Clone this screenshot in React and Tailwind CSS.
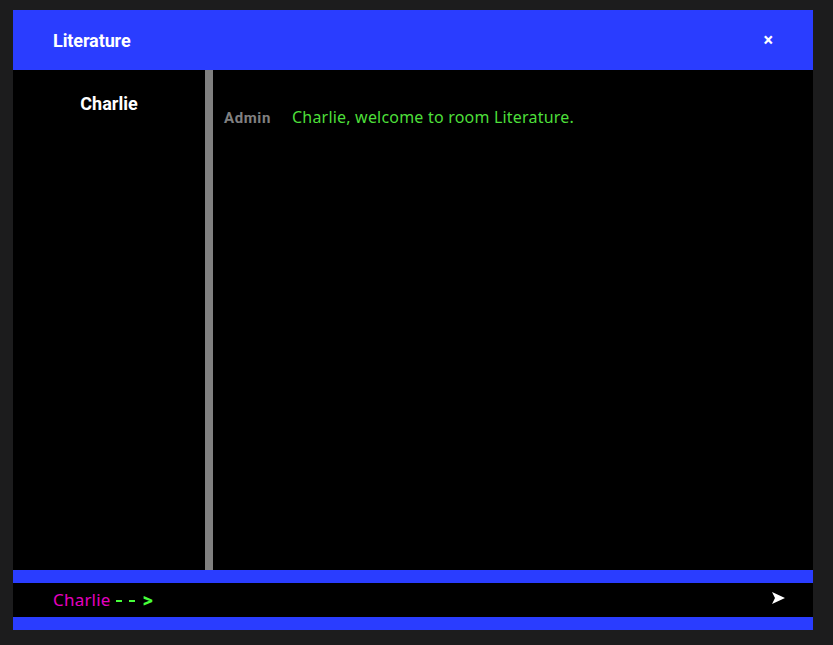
export default function App() {
  return (
    <div className="w-[833px] h-[645px] bg-[#1c1c1d] pt-[10px] pl-[13px]" style={{ fontFamily: 'Roboto, "Liberation Sans", sans-serif' }}>
      <div className="w-[800px] h-[620px] flex flex-col bg-black">
        <div className="h-[60px] bg-[#2a3dff] flex items-center justify-between pl-[40px] pr-[40px]">
          <span className="text-white font-bold text-[18px] tracking-[-0.1px]">Literature</span>
          <span className="text-white text-[18px] font-bold leading-none">×</span>
        </div>
        <div className="flex h-[500px]">
          <div className="w-[192px] flex justify-center pt-[23px]">
            <span className="text-white font-bold text-[18px] leading-[22px]">Charlie</span>
          </div>
          <div className="w-[8px] bg-[#808080]" />
          <div className="flex-1 pl-[11px] pt-[35px]">
            <div className="flex items-baseline">
              <span className="w-[68px] text-[#808080] font-bold text-[15px] tracking-[0.6px]">Admin</span>
              <span className="text-[#4ddf3a] text-[16px] tracking-[0.2px]" style={{ fontFamily: '"Noto Sans", sans-serif' }}>Charlie, welcome to room Literature.</span>
            </div>
          </div>
        </div>
        <div className="h-[13px] bg-[#2a3dff]" />
        <div className="h-[34px] flex items-center justify-between pl-[40px] pr-[28px]">
          <div className="flex items-center">
            <span className="text-[#e600c0] text-[17px] tracking-[0.2px]" style={{ fontFamily: '"Noto Sans", sans-serif' }}>Charlie</span>
            <div className="w-[6px] h-[2px] bg-[#47ff3a] ml-[5px] mt-[2px]" />
            <div className="w-[6px] h-[2px] bg-[#47ff3a] ml-[7px] mt-[2px]" />
            <span className="text-[#47ff3a] text-[20px] font-bold ml-[8px] leading-none">&gt;</span>
          </div>
          <svg width="13" height="12" viewBox="0 0 13 12" className="mt-[-4px]">
            <path d="M0 0 L13 6 L0 12 L3 6 Z" fill="white" />
          </svg>
        </div>
        <div className="h-[13px] bg-[#2a3dff]" />
      </div>
    </div>
  );
}
